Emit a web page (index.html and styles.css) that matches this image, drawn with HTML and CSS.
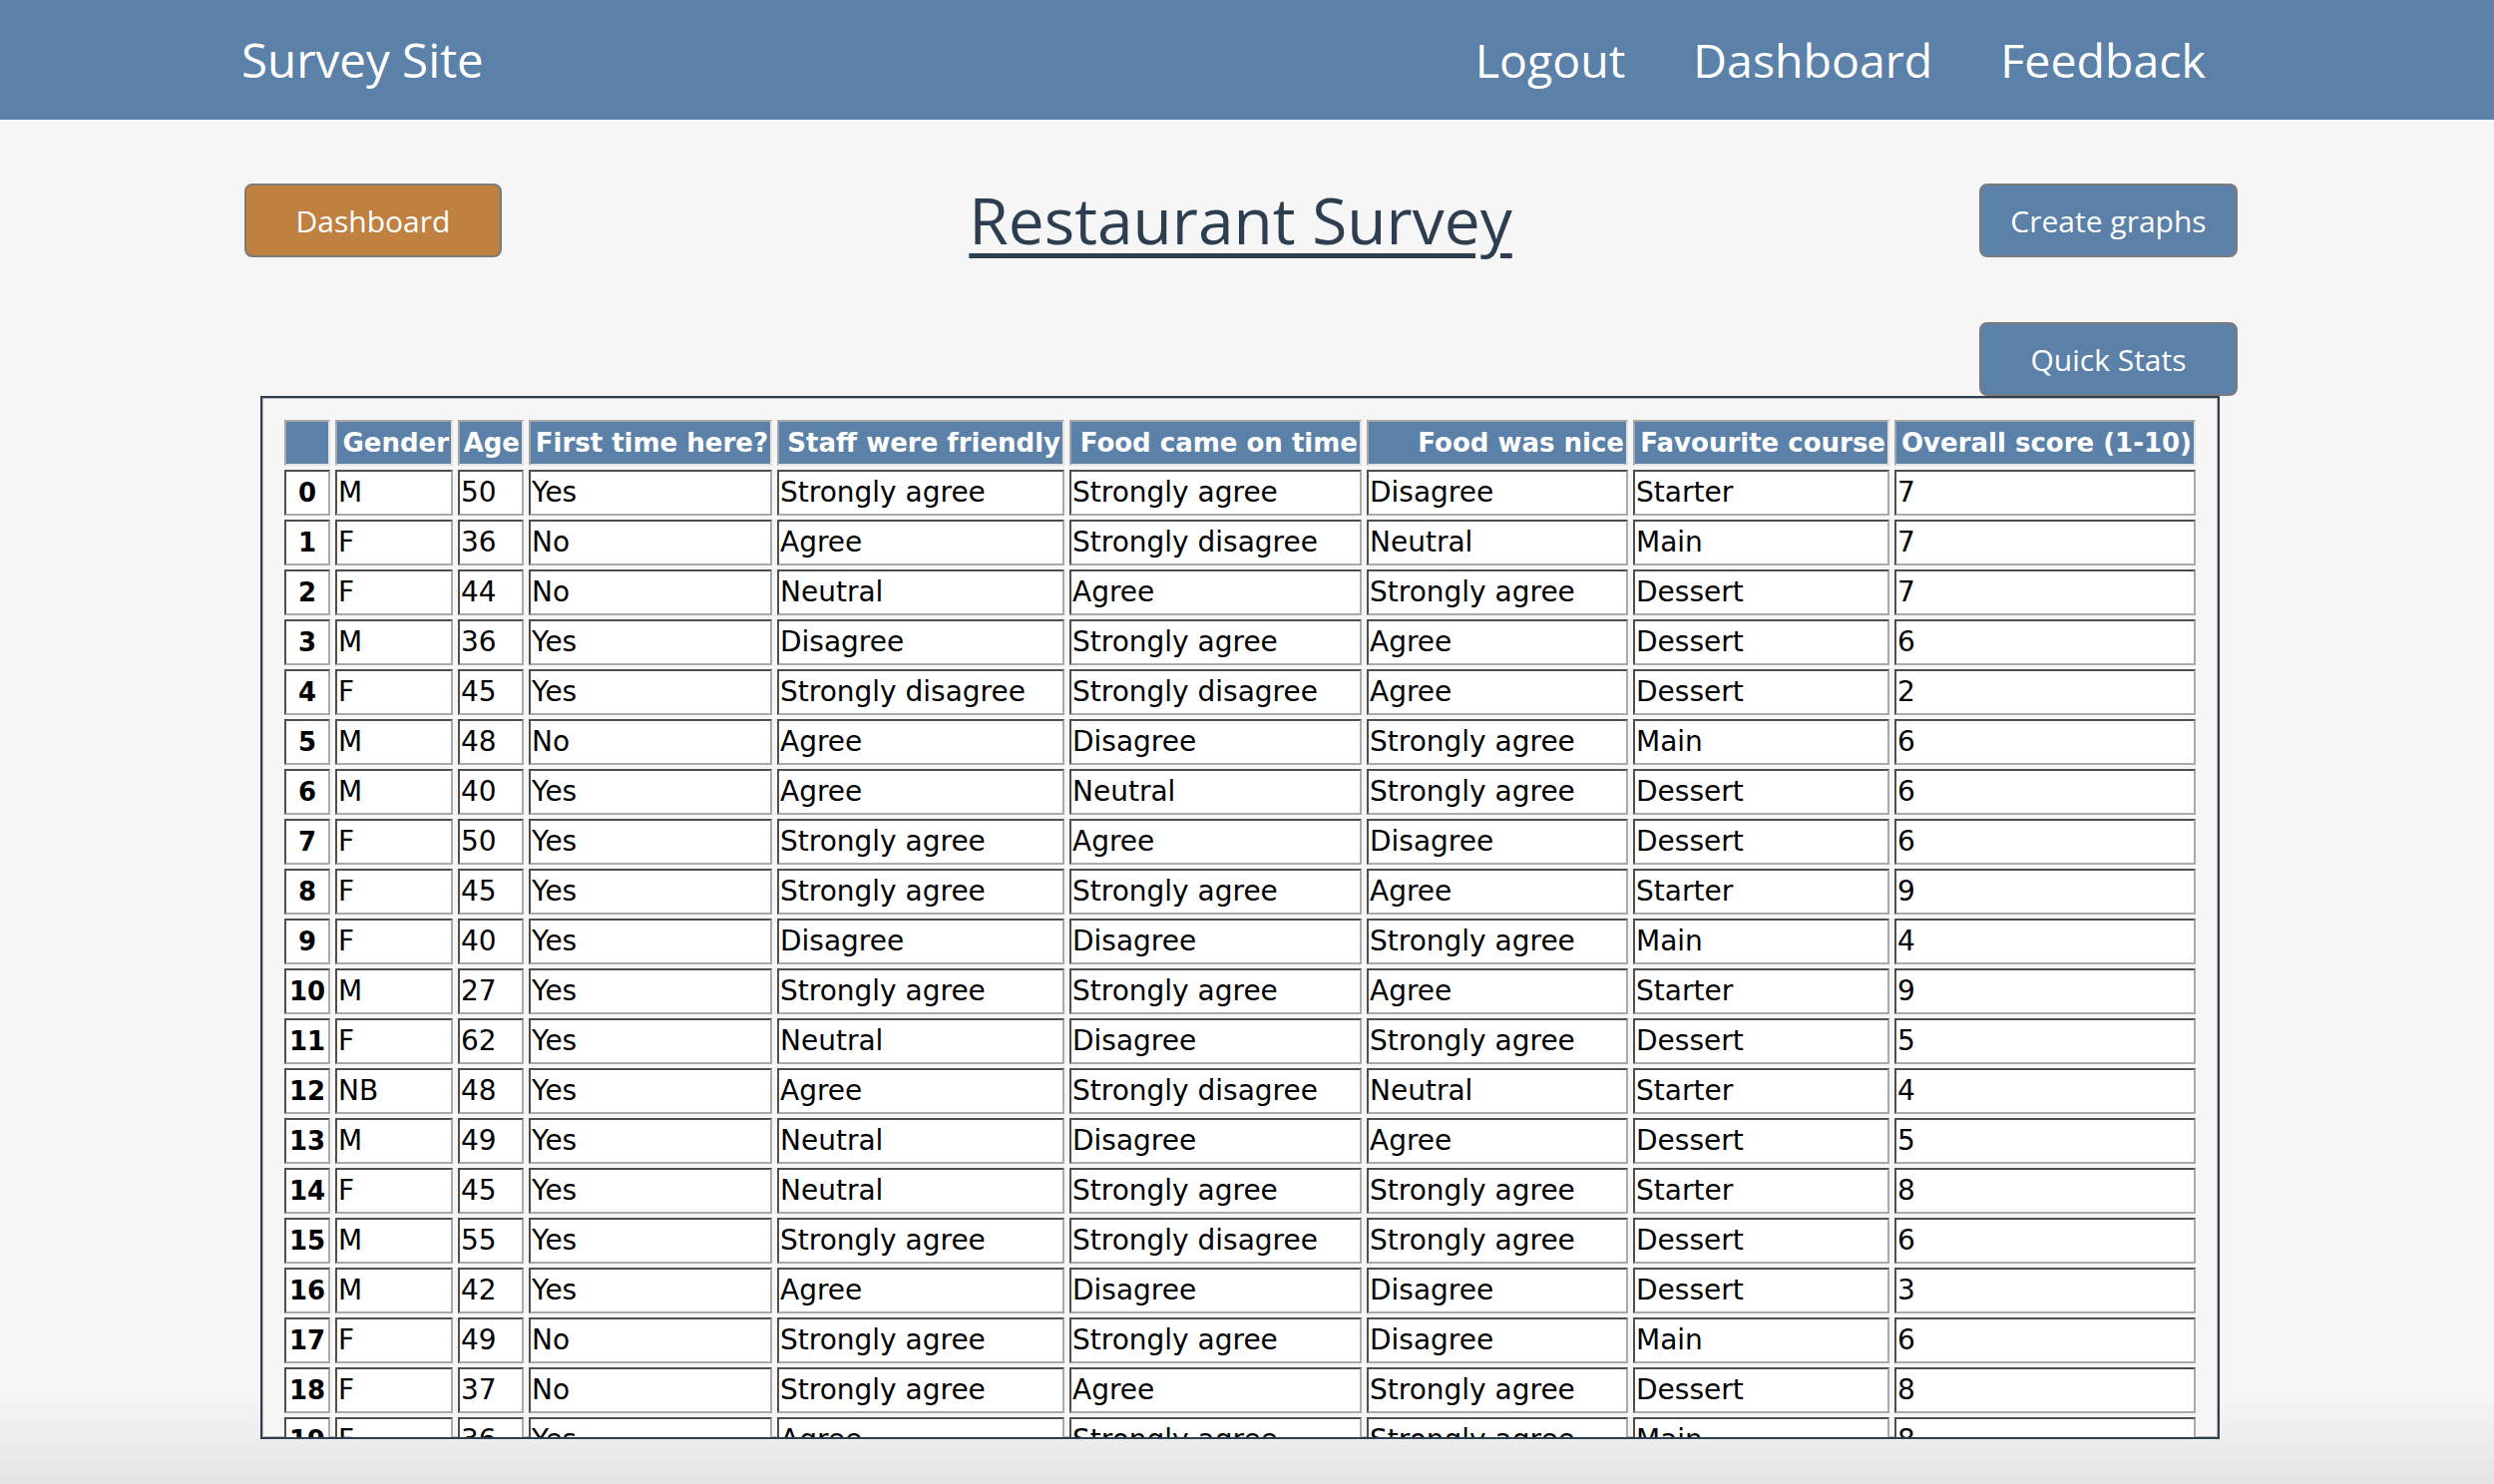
FILE: index.html
```html
<!DOCTYPE html>
<html lang="en">
<head>
<meta charset="utf-8">
<title>Restaurant Survey</title>
<link rel="stylesheet" href="styles.css">
</head>
<body>
<header class="navbar">
  <a class="brand" href="#">Survey Site</a>
  <nav class="nav-links">
    <a href="#">Logout</a>
    <a href="#">Dashboard</a>
    <a href="#">Feedback</a>
  </nav>
</header>
<main class="page">
  <div class="top-row">
    <a class="btn btn-orange" href="#">Dashboard</a>
    <h1 class="title">Restaurant Survey</h1>
    <a class="btn btn-blue" href="#">Create graphs</a>
  </div>
  <div class="stats-row">
    <a class="btn btn-blue" href="#">Quick Stats</a>
  </div>
  <div class="table-box">
    <table class="dataframe">
      <colgroup>
        <col class="c-idx"><col class="c-gender"><col class="c-age"><col class="c-first"><col class="c-staff"><col class="c-time"><col class="c-nice"><col class="c-course"><col class="c-score">
      </colgroup>
      <thead>
        <tr><th></th><th>Gender</th><th>Age</th><th>First time here?</th><th>Staff were friendly</th><th>Food came on time</th><th>Food was nice</th><th>Favourite course</th><th>Overall score (1-10)</th></tr>
      </thead>
      <tbody>
        <tr><th>0</th><td>M</td><td>50</td><td>Yes</td><td>Strongly agree</td><td>Strongly agree</td><td>Disagree</td><td>Starter</td><td>7</td></tr>
        <tr><th>1</th><td>F</td><td>36</td><td>No</td><td>Agree</td><td>Strongly disagree</td><td>Neutral</td><td>Main</td><td>7</td></tr>
        <tr><th>2</th><td>F</td><td>44</td><td>No</td><td>Neutral</td><td>Agree</td><td>Strongly agree</td><td>Dessert</td><td>7</td></tr>
        <tr><th>3</th><td>M</td><td>36</td><td>Yes</td><td>Disagree</td><td>Strongly agree</td><td>Agree</td><td>Dessert</td><td>6</td></tr>
        <tr><th>4</th><td>F</td><td>45</td><td>Yes</td><td>Strongly disagree</td><td>Strongly disagree</td><td>Agree</td><td>Dessert</td><td>2</td></tr>
        <tr><th>5</th><td>M</td><td>48</td><td>No</td><td>Agree</td><td>Disagree</td><td>Strongly agree</td><td>Main</td><td>6</td></tr>
        <tr><th>6</th><td>M</td><td>40</td><td>Yes</td><td>Agree</td><td>Neutral</td><td>Strongly agree</td><td>Dessert</td><td>6</td></tr>
        <tr><th>7</th><td>F</td><td>50</td><td>Yes</td><td>Strongly agree</td><td>Agree</td><td>Disagree</td><td>Dessert</td><td>6</td></tr>
        <tr><th>8</th><td>F</td><td>45</td><td>Yes</td><td>Strongly agree</td><td>Strongly agree</td><td>Agree</td><td>Starter</td><td>9</td></tr>
        <tr><th>9</th><td>F</td><td>40</td><td>Yes</td><td>Disagree</td><td>Disagree</td><td>Strongly agree</td><td>Main</td><td>4</td></tr>
        <tr><th>10</th><td>M</td><td>27</td><td>Yes</td><td>Strongly agree</td><td>Strongly agree</td><td>Agree</td><td>Starter</td><td>9</td></tr>
        <tr><th>11</th><td>F</td><td>62</td><td>Yes</td><td>Neutral</td><td>Disagree</td><td>Strongly agree</td><td>Dessert</td><td>5</td></tr>
        <tr><th>12</th><td>NB</td><td>48</td><td>Yes</td><td>Agree</td><td>Strongly disagree</td><td>Neutral</td><td>Starter</td><td>4</td></tr>
        <tr><th>13</th><td>M</td><td>49</td><td>Yes</td><td>Neutral</td><td>Disagree</td><td>Agree</td><td>Dessert</td><td>5</td></tr>
        <tr><th>14</th><td>F</td><td>45</td><td>Yes</td><td>Neutral</td><td>Strongly agree</td><td>Strongly agree</td><td>Starter</td><td>8</td></tr>
        <tr><th>15</th><td>M</td><td>55</td><td>Yes</td><td>Strongly agree</td><td>Strongly disagree</td><td>Strongly agree</td><td>Dessert</td><td>6</td></tr>
        <tr><th>16</th><td>M</td><td>42</td><td>Yes</td><td>Agree</td><td>Disagree</td><td>Disagree</td><td>Dessert</td><td>3</td></tr>
        <tr><th>17</th><td>F</td><td>49</td><td>No</td><td>Strongly agree</td><td>Strongly agree</td><td>Disagree</td><td>Main</td><td>6</td></tr>
        <tr><th>18</th><td>F</td><td>37</td><td>No</td><td>Strongly agree</td><td>Agree</td><td>Strongly agree</td><td>Dessert</td><td>8</td></tr>
        <tr><th>19</th><td>F</td><td>36</td><td>Yes</td><td>Agree</td><td>Strongly agree</td><td>Strongly agree</td><td>Main</td><td>8</td></tr>
      </tbody>
    </table>
  </div>
</main>
</body>
</html>
```
FILE: styles.css
```css
html {
  height: 100%;
  background: linear-gradient(to bottom, #f6f6f6 0, #f6f6f6 1395px, #e4e4e4 1488px);
}
body {
  margin: 0;
  height: 1488px;
  overflow: hidden;
  font-family: "Open Sans", "Liberation Sans", sans-serif;
  color: #000;
}
a { text-decoration: none; }

.navbar {
  height: 120px;
  background: #5b81a8;
  display: flex;
  align-items: center;
  justify-content: space-between;
  padding: 0 289px 0 242px;
}
.brand {
  color: #fff;
  font-size: 47.5px;
  line-height: 1;
}
.nav-links {
  display: flex;
  gap: 68px;
}
.nav-links a {
  color: #fff;
  font-size: 46.5px;
  line-height: 1;
}

.page {
  width: 1998px;
  margin-left: 245px;
  padding-top: 64px;
}
.top-row {
  display: grid;
  grid-template-columns: 258px 1fr 259px;
  grid-template-rows: 74px;
  align-items: center;
}
.title {
  margin: 0;
  text-align: center;
  font-size: 64px;
  line-height: 74px;
  font-weight: 400;
  color: #2c3e50;
  text-decoration: underline;
  text-decoration-thickness: 5px;
  text-underline-offset: 9px;
}
.btn {
  box-sizing: border-box;
  display: flex;
  align-items: center;
  justify-content: center;
  height: 74px;
  border: 2px solid #7b7b7b;
  border-radius: 8px;
  color: #fff;
  font-size: 30px;
}
.btn-orange { background: #c08040; }
.btn-blue { background: #5b81a8; }

.stats-row {
  display: flex;
  justify-content: flex-end;
  margin-top: 65px;
}
.stats-row .btn { width: 259px; }

.table-box {
  box-sizing: border-box;
  height: 1046px;
  margin: 0 18px 0 16px;
  border: 2px solid #2c3e50;
  box-shadow: inset 0 0 0 1px #b8b8b8;
  padding: 18px 17px;
  overflow: hidden;
  background: #f6f6f6;
}
.dataframe {
  width: 100%;
  table-layout: fixed;
  border-collapse: separate;
  border-spacing: 5px 4px;
  font-family: "DejaVu Sans", "Liberation Sans", sans-serif;
}
.c-idx { width: 46px; }
.c-gender { width: 118px; }
.c-age { width: 66px; }
.c-first { width: 244px; }
.c-staff { width: 288px; }
.c-time { width: 293px; }
.c-nice { width: 262px; }
.c-course { width: 257px; }
.c-score { width: 302px; }

.dataframe th,
.dataframe td {
  box-sizing: border-box;
  height: 46px;
  padding: 0 1px;
  white-space: nowrap;
  overflow: hidden;
}
.dataframe td {
  background: #fff;
  font-size: 28px;
  line-height: 42px;
  text-align: left;
  border: 2px solid;
  border-color: #4e4e4e #aaaaaa #aaaaaa #4e4e4e;
}
.dataframe tbody th {
  background: #fff;
  font-size: 26px;
  font-weight: 700;
  line-height: 42px;
  text-align: center;
  border: 2px solid;
  border-color: #4e4e4e #aaaaaa #aaaaaa #4e4e4e;
}
.dataframe thead th {
  background: #5b81a8;
  color: #fff;
  font-size: 26px;
  font-weight: 700;
  line-height: 42px;
  text-align: right;
  padding: 0 2px;
  border: 2px solid;
  border-color: #a6a6a6 #e2e2e2 #e2e2e2 #a6a6a6;
}
```
